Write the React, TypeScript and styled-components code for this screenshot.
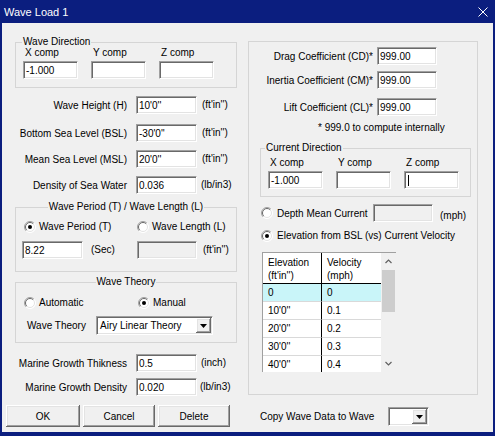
import React from 'react'
import styled, { createGlobalStyle, css } from 'styled-components'

const GlobalStyle = createGlobalStyle`
  html, body {
    margin: 0;
    padding: 0;
    background: #f0f0f0;
  }
  * {
    box-sizing: border-box;
  }
  body {
    font-family: 'Liberation Sans', Arial, sans-serif;
    font-size: 10px;
    color: #000;
  }
`

const sunken = css`
  border-top: 1px solid #a0a0a0;
  border-left: 1px solid #a0a0a0;
  border-right: 1px solid #ffffff;
  border-bottom: 1px solid #ffffff;
  box-shadow: inset 1px 1px 0 #696969, inset -1px -1px 0 #e3e3e3;
`

const raised = css`
  border: none;
  box-shadow: inset -1px -1px 0 #696969, inset 1px 1px 0 #ffffff, inset -2px -2px 0 #a0a0a0,
    inset 2px 2px 0 #e3e3e3;
`

const Window = styled.div`
  width: 495px;
  height: 436px;
  background: #0b1e7f;
  display: flex;
  flex-direction: column;
`

const TitleBar = styled.div`
  height: 23px;
  flex-shrink: 0;
  display: flex;
  align-items: center;
  justify-content: space-between;
  padding: 0 7px 0 4px;
  color: #fff;
  font-size: 11px;
`

const Client = styled.div`
  flex: 1;
  margin: 0 2px 4px;
  background: #f0f0f0;
  display: flex;
`

const LeftCol = styled.div`
  width: 246px;
  flex-shrink: 0;
  padding-left: 4px;
  display: flex;
  flex-direction: column;
  align-items: flex-start;
`

const LeftStack = styled.div`
  padding-left: 9px;
  display: flex;
  flex-direction: column;
  align-items: flex-start;
`

const RightCol = styled.div`
  flex: 1;
  padding-top: 18px;
  display: flex;
  flex-direction: column;
  align-items: flex-start;
`

const RightGroup = styled.div`
  width: 230px;
  border: 1px solid #d5d5d5;
  padding-bottom: 22px;
  display: flex;
  flex-direction: column;
  align-items: flex-start;
`

const Group = styled.fieldset<{ $w: number; $mt?: number; $ml?: number }>`
  margin: ${p => p.$mt ?? 0}px 0 0 ${p => p.$ml ?? 0}px;
  padding: 0;
  width: ${p => p.$w}px;
  min-width: 0;
  border: 1px solid #d5d5d5;
`

const Legend = styled.legend<{ $center?: boolean; $ml?: number }>`
  padding: 0 1px;
  line-height: 12px;
  margin: ${p => (p.$center ? '0 auto' : `0 0 0 ${p.$ml ?? 0}px`)};
`

const GroupBody = styled.div<{ $pt: number; $pb: number; $pl: number }>`
  padding: ${p => p.$pt}px 0 ${p => p.$pb}px ${p => p.$pl}px;
`

const CompGrid = styled.div<{ $mt?: number }>`
  display: grid;
  grid-template-columns: repeat(3, 55px);
  column-gap: 13px;
  margin-top: ${p => p.$mt ?? 0}px;
`

const CompLabel = styled.span`
  padding-left: 2px;
  line-height: 11px;
  white-space: nowrap;
`

const Row = styled.div<{ $mt?: number; $ml?: number; $h?: number }>`
  display: flex;
  align-items: center;
  height: ${p => p.$h ?? 18}px;
  margin-top: ${p => p.$mt ?? 0}px;
  margin-left: ${p => p.$ml ?? 0}px;
`

const FieldLabel = styled.span<{ $w: number; $left?: boolean }>`
  width: ${p => p.$w}px;
  flex-shrink: 0;
  text-align: ${p => (p.$left ? 'left' : 'right')};
  white-space: nowrap;
`

const TextBox = styled.div<{ $w: number; $ml?: number; $disabled?: boolean }>`
  ${sunken};
  width: ${p => p.$w}px;
  height: 18px;
  flex-shrink: 0;
  margin-left: ${p => p.$ml ?? 0}px;
  padding-left: 2px;
  background: ${p => (p.$disabled ? '#f0f0f0' : '#ffffff')};
  display: flex;
  align-items: center;
  white-space: nowrap;
`

const Caret = styled.span`
  width: 1px;
  height: 11px;
  margin-left: 1px;
  background: #000;
`

const Unit = styled.span<{ $ml: number; $w?: number; $low?: boolean }>`
  margin-left: ${p => p.$ml}px;
  width: ${p => (p.$w ? `${p.$w}px` : 'auto')};
  flex-shrink: 0;
  white-space: nowrap;
  line-height: 12px;
  align-self: ${p => (p.$low ? 'flex-end' : 'center')};
`

const RadioPair = styled.div<{ $c1: number; $mt?: number; $ml?: number }>`
  display: grid;
  grid-template-columns: ${p => p.$c1}px auto;
  margin-top: ${p => p.$mt ?? 0}px;
  margin-left: ${p => p.$ml ?? 0}px;
`

const RadioItem = styled.label<{ $w?: number; $gap?: number }>`
  display: flex;
  align-items: center;
  gap: ${p => p.$gap ?? 3}px;
  height: 13px;
  width: ${p => (p.$w ? `${p.$w}px` : 'auto')};
  flex-shrink: 0;
  white-space: nowrap;
`

const Note = styled.div`
  margin-top: 6px;
  padding-left: 69px;
  line-height: 12px;
  white-space: nowrap;
`

const Combo = styled.div<{ $w: number; $ml?: number }>`
  ${sunken};
  width: ${p => p.$w}px;
  height: 19px;
  margin-left: ${p => p.$ml ?? 0}px;
  padding: 1px;
  background: #fff;
  display: flex;
  align-items: center;
`

const ComboText = styled.span`
  flex: 1;
  padding-left: 2px;
  white-space: nowrap;
  overflow: hidden;
`

const DropBtn = styled.span`
  ${raised};
  width: 15px;
  height: 15px;
  background: #f0f0f0;
  display: flex;
  align-items: center;
  justify-content: center;
  flex-shrink: 0;
`

const ButtonRow = styled.div`
  display: flex;
  margin-top: 9px;
`

const PushButton = styled.button<{ $w: number; $ml?: number }>`
  ${raised};
  width: ${p => p.$w}px;
  height: 22px;
  margin-left: ${p => p.$ml ?? 0}px;
  padding: 0;
  background: #f0f0f0;
  font: inherit;
  color: #000;
`

const TableBox = styled.div<{ $mt: number; $ml: number }>`
  display: flex;
  width: 134px;
  height: 120px;
  margin: ${p => p.$mt}px 0 0 ${p => p.$ml}px;
  background: #fff;
  border-top: 1px solid #a0a0a0;
  border-left: 1px solid #a0a0a0;
  overflow: hidden;
`

const Grid = styled.div`
  width: 118px;
  display: grid;
  grid-template-columns: 59px 59px;
  grid-template-rows: 31px;
  grid-auto-rows: 18px;
  align-content: start;
`

const Cell = styled.div<{ $head?: boolean; $sel?: boolean; $first?: boolean }>`
  border-right: ${p => (p.$first ? '1px solid #000' : 'none')};
  border-bottom: 1px solid ${p => (p.$head ? '#000' : '#d9d9d9')};
  background: ${p => (p.$sel ? '#c9f5f9' : '#fff')};
  padding: ${p => (p.$head ? '3px 0 0 5px' : '0 0 0 5px')};
  line-height: ${p => (p.$head ? '13px' : '17px')};
  white-space: nowrap;
`

const ScrollTrack = styled.div`
  width: 15px;
  flex-shrink: 0;
  background: #f0f0f0;
  display: flex;
  flex-direction: column;
`

const ScrollArrow = styled.div`
  height: 17px;
  flex-shrink: 0;
  display: flex;
  align-items: center;
  justify-content: center;
`

const Thumb = styled.div`
  height: 42px;
  margin: 0 1px;
  background: #cdcdcd;
`

const ScrollGap = styled.div`
  flex: 1;
`

const RadioMark = ({ on }: { on?: boolean }) => (
  <svg width="12" height="12" viewBox="0 0 12 12">
    <circle cx="6" cy="6" r="5.5" fill="#fff" />
    <path d="M2.1 9.9 A5.5 5.5 0 0 1 9.9 2.1" fill="none" stroke="#a0a0a0" />
    <path d="M9.9 2.1 A5.5 5.5 0 0 1 2.1 9.9" fill="none" stroke="#ffffff" />
    <path d="M2.8 9.2 A4.5 4.5 0 0 1 9.2 2.8" fill="none" stroke="#696969" />
    <path d="M9.2 2.8 A4.5 4.5 0 0 1 2.8 9.2" fill="none" stroke="#e3e3e3" />
    {on && <circle cx="6" cy="6" r="2" fill="#000" />}
  </svg>
)

const DownTri = () => (
  <svg width="7" height="4" viewBox="0 0 7 4">
    <polygon points="0,0 7,0 3.5,4" fill="#000" />
  </svg>
)

const Chevron = ({ down }: { down?: boolean }) => (
  <svg width="7" height="5" viewBox="0 0 7 5">
    <polyline
      points={down ? '0.5,1 3.5,4 6.5,1' : '0.5,4 3.5,1 6.5,4'}
      fill="none"
      stroke="#606060"
      strokeWidth="1.2"
    />
  </svg>
)

const CloseIcon = () => (
  <svg width="10" height="10" viewBox="0 0 10 10">
    <path d="M0.5 0.5 L9.5 9.5 M9.5 0.5 L0.5 9.5" stroke="#fff" strokeWidth="1" />
  </svg>
)

const currentRows = [
  ['0', '0'],
  ["10'0''", '0.1'],
  ["20'0''", '0.2'],
  ["30'0''", '0.3'],
  ["40'0''", '0.4'],
]

const App = () => {
  return (
    <>
      <GlobalStyle />
      <Window>
        <TitleBar>
          <span>Wave Load 1</span>
          <CloseIcon />
        </TitleBar>
        <Client>
          <LeftCol>
            <LeftStack>
              <Group $w={222} $mt={13}>
                <Legend $ml={6}>Wave Direction</Legend>
                <GroupBody $pt={0} $pb={8} $pl={7}>
                  <CompGrid $mt={-1}>
                    <CompLabel>X comp</CompLabel>
                    <CompLabel>Y comp</CompLabel>
                    <CompLabel>Z comp</CompLabel>
                  </CompGrid>
                  <CompGrid $mt={3}>
                    <TextBox $w={55}>-1.000</TextBox>
                    <TextBox $w={55} />
                    <TextBox $w={55} />
                  </CompGrid>
                </GroupBody>
              </Group>

              <Row $mt={8}>
                <FieldLabel $w={112}>Wave Height (H)</FieldLabel>
                <TextBox $w={61} $ml={9}>10'0''</TextBox>
                <Unit $ml={5}>(ft'in'')</Unit>
              </Row>
              <Row $mt={10}>
                <FieldLabel $w={112}>Bottom Sea Level (BSL)</FieldLabel>
                <TextBox $w={61} $ml={9}>-30'0''</TextBox>
                <Unit $ml={5}>(ft'in'')</Unit>
              </Row>
              <Row $mt={8}>
                <FieldLabel $w={112}>Mean Sea Level (MSL)</FieldLabel>
                <TextBox $w={61} $ml={9}>20'0''</TextBox>
                <Unit $ml={5}>(ft'in'')</Unit>
              </Row>
              <Row $mt={8}>
                <FieldLabel $w={112}>Density of Sea Water</FieldLabel>
                <TextBox $w={61} $ml={9}>0.036</TextBox>
                <Unit $ml={4}>(lb/in3)</Unit>
              </Row>

              <Group $w={222} $mt={7}>
                <Legend $center>Wave Period (T) / Wave Length (L)</Legend>
                <GroupBody $pt={7} $pb={12} $pl={0}>
                  <RadioPair $c1={113} $ml={8}>
                    <RadioItem>
                      <RadioMark on />
                      Wave Period (T)
                    </RadioItem>
                    <RadioItem>
                      <RadioMark />
                      Wave Length (L)
                    </RadioItem>
                  </RadioPair>
                  <Row $mt={8} $ml={6}>
                    <TextBox $w={61}>8.22</TextBox>
                    <Unit $ml={8} $w={46}>
                      (Sec)
                    </Unit>
                    <TextBox $w={60} $disabled />
                    <Unit $ml={6}>(ft'in'')</Unit>
                  </Row>
                </GroupBody>
              </Group>

              <Group $w={222} $mt={4}>
                <Legend $center>Wave Theory</Legend>
                <GroupBody $pt={8} $pb={7} $pl={0}>
                  <RadioPair $c1={114} $ml={8}>
                    <RadioItem>
                      <RadioMark />
                      Automatic
                    </RadioItem>
                    <RadioItem>
                      <RadioMark on />
                      Manual
                    </RadioItem>
                  </RadioPair>
                  <Row $mt={7} $ml={11} $h={19}>
                    <FieldLabel $w={69} $left>
                      Wave Theory
                    </FieldLabel>
                    <Combo $w={117}>
                      <ComboText>Airy Linear Theory</ComboText>
                      <DropBtn>
                        <DownTri />
                      </DropBtn>
                    </Combo>
                  </Row>
                </GroupBody>
              </Group>

              <Row $mt={11}>
                <FieldLabel $w={112}>Marine Growth Thikness</FieldLabel>
                <TextBox $w={61} $ml={9}>0.5</TextBox>
                <Unit $ml={4}>(inch)</Unit>
              </Row>
              <Row $mt={6}>
                <FieldLabel $w={112}>Marine Growth Density</FieldLabel>
                <TextBox $w={61} $ml={9}>0.020</TextBox>
                <Unit $ml={3}>(lb/in3)</Unit>
              </Row>
            </LeftStack>

            <ButtonRow>
              <PushButton $w={74}>OK</PushButton>
              <PushButton $w={72} $ml={3}>
                Cancel
              </PushButton>
              <PushButton $w={72} $ml={3}>
                Delete
              </PushButton>
            </ButtonRow>
          </LeftCol>

          <RightCol>
            <RightGroup>
              <Row $mt={5}>
                <FieldLabel $w={124}>Drag Coefficient (CD)*</FieldLabel>
                <TextBox $w={60} $ml={4}>999.00</TextBox>
              </Row>
              <Row $mt={6}>
                <FieldLabel $w={124}>Inertia Coefficient (CM)*</FieldLabel>
                <TextBox $w={60} $ml={4}>999.00</TextBox>
              </Row>
              <Row $mt={9}>
                <FieldLabel $w={124}>Lift Coefficient (CL)*</FieldLabel>
                <TextBox $w={60} $ml={4}>999.00</TextBox>
              </Row>
              <Note>* 999.0 to compute internally</Note>

              <Group $w={211} $mt={8} $ml={11}>
                <Legend $ml={4}>Current Direction</Legend>
                <GroupBody $pt={3} $pb={7} $pl={7}>
                  <CompGrid>
                    <CompLabel>X comp</CompLabel>
                    <CompLabel>Y comp</CompLabel>
                    <CompLabel>Z comp</CompLabel>
                  </CompGrid>
                  <CompGrid $mt={3}>
                    <TextBox $w={55}>-1.000</TextBox>
                    <TextBox $w={55} />
                    <TextBox $w={55}>
                      <Caret />
                    </TextBox>
                  </CompGrid>
                </GroupBody>
              </Group>

              <Row $mt={7} $ml={12}>
                <RadioItem $w={112} $gap={4}>
                  <RadioMark />
                  Depth Mean Current
                </RadioItem>
                <TextBox $w={60} $disabled />
                <Unit $ml={7} $low>
                  (mph)
                </Unit>
              </Row>
              <Row $mt={7} $ml={12} $h={13}>
                <RadioItem $gap={4}>
                  <RadioMark on />
                  Elevation from BSL (vs) Current Velocity
                </RadioItem>
              </Row>

              <TableBox $mt={10} $ml={13}>
                <Grid>
                  <Cell $head $first>
                    Elevation
                    <br />
                    (ft'in'')
                  </Cell>
                  <Cell $head>
                    Velocity
                    <br />
                    (mph)
                  </Cell>
                  {currentRows.map(([elev, vel], idx) => (
                    <React.Fragment key={idx}>
                      <Cell $first $sel={idx === 0}>
                        {elev}
                      </Cell>
                      <Cell $sel={idx === 0}>{vel}</Cell>
                    </React.Fragment>
                  ))}
                </Grid>
                <ScrollTrack>
                  <ScrollArrow>
                    <Chevron />
                  </ScrollArrow>
                  <Thumb />
                  <ScrollGap />
                  <ScrollArrow>
                    <Chevron down />
                  </ScrollArrow>
                </ScrollTrack>
              </TableBox>
            </RightGroup>

            <Row $mt={12} $ml={12} $h={19}>
              <FieldLabel $w={128} $left>
                Copy Wave Data to Wave
              </FieldLabel>
              <Combo $w={41}>
                <ComboText />
                <DropBtn>
                  <DownTri />
                </DropBtn>
              </Combo>
            </Row>
          </RightCol>
        </Client>
      </Window>
    </>
  )
}

export default App
